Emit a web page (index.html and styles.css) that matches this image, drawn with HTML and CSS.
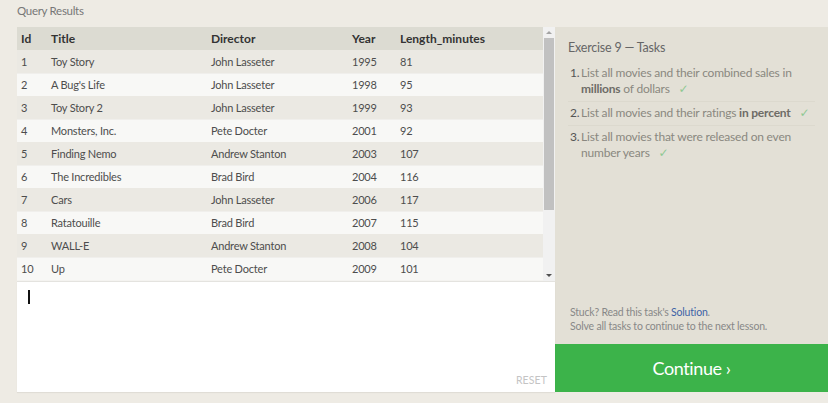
FILE: index.html
```html
<!DOCTYPE html>
<html>
<head>
<meta charset="utf-8">
<link rel="stylesheet" href="styles.css">
</head>
<body>
<div class="page">
  <div class="label">Query Results</div>
  <div class="main">
    <div class="left">
      <div class="results">
        <div class="table-wrap">
          <table class="grid">
            <thead>
              <tr><th class="c-id">Id</th><th class="c-title">Title</th><th class="c-dir">Director</th><th class="c-year">Year</th><th>Length_minutes</th></tr>
            </thead>
            <tbody>
              <tr><td>1</td><td>Toy Story</td><td>John Lasseter</td><td>1995</td><td>81</td></tr>
              <tr><td>2</td><td>A Bug's Life</td><td>John Lasseter</td><td>1998</td><td>95</td></tr>
              <tr><td>3</td><td>Toy Story 2</td><td>John Lasseter</td><td>1999</td><td>93</td></tr>
              <tr><td>4</td><td>Monsters, Inc.</td><td>Pete Docter</td><td>2001</td><td>92</td></tr>
              <tr><td>5</td><td>Finding Nemo</td><td>Andrew Stanton</td><td>2003</td><td>107</td></tr>
              <tr><td>6</td><td>The Incredibles</td><td>Brad Bird</td><td>2004</td><td>116</td></tr>
              <tr><td>7</td><td>Cars</td><td>John Lasseter</td><td>2006</td><td>117</td></tr>
              <tr><td>8</td><td>Ratatouille</td><td>Brad Bird</td><td>2007</td><td>115</td></tr>
              <tr><td>9</td><td>WALL-E</td><td>Andrew Stanton</td><td>2008</td><td>104</td></tr>
              <tr><td>10</td><td>Up</td><td>Pete Docter</td><td>2009</td><td>101</td></tr>
            </tbody>
          </table>
        </div>
        <div class="scrollbar">
          <div class="arrow up"></div>
          <div class="track"><div class="thumb"></div></div>
          <div class="arrow down"></div>
        </div>
      </div>
      <div class="editor">
        <div class="caret"></div>
        <div class="reset">RESET</div>
      </div>
    </div>
    <div class="right">
      <div class="tasks">
        <div class="tasks-title">Exercise 9 — Tasks</div>
        <ol class="task-list">
          <li><span class="num">1.</span><span class="txt">List all movies and their combined sales in <b>millions</b> of dollars <span class="check">✓</span></span></li>
          <li><span class="num">2.</span><span class="txt">List all movies and their ratings <b>in percent</b> <span class="check">✓</span></span></li>
          <li><span class="num">3.</span><span class="txt">List all movies that were released on even number years <span class="check">✓</span></span></li>
        </ol>
        <div class="help">
          <div>Stuck? Read this task's <span class="link">Solution</span>.</div>
          <div>Solve all tasks to continue to the next lesson.</div>
        </div>
      </div>
      <div class="continue">Continue ›</div>
    </div>
  </div>
</div>
</body>
</html>
```
FILE: styles.css
```css
* { box-sizing: border-box; }
html, body { margin: 0; padding: 0; }
body {
  background: #eeebe4;
  font-family: "Lato", "Open Sans", sans-serif;
  color: #555;
  width: 828px;
  height: 403px;
  overflow: hidden;
}
.page { padding: 3px 0 0 17px; }
.label {
  font-size: 11.5px;
  letter-spacing: -0.3px;
  color: #777;
  height: 24px;
  line-height: 16px;
}
.main { display: flex; }
.left { width: 538px; display: flex; flex-direction: column; }
.results { display: flex; height: 254px; background: #f4f3f0; }
.table-wrap { width: 526px; overflow: hidden; }
.grid { border-collapse: collapse; width: 100%; font-size: 11px; letter-spacing: -0.2px; }
.grid th {
  background: #dcdbd2;
  color: #333;
  font-weight: 700;
  font-size: 12px;
  letter-spacing: 0;
  text-align: left;
  height: 23px;
  padding: 0 0 0 4px;
}
.grid td {
  height: 23px;
  padding: 0 0 0 4px;
  color: #4d4d4d;
}
.grid tbody tr:nth-child(odd) td { background: #ebe9e3; }
.grid tbody tr:nth-child(even) td { background: #f8f8f6; border-top: 1px solid #f0efec; }
.c-id { width: 30px; }
.c-title { width: 160px; }
.c-dir { width: 141px; }
.c-year { width: 48px; }
.scrollbar {
  width: 12px;
  background: #f1f1f1;
  display: flex;
  flex-direction: column;
  align-items: center;
}
.arrow { height: 11px; width: 12px; position: relative; }
.arrow.up::after, .arrow.down::after {
  content: "";
  position: absolute;
  left: 3px;
  border-left: 3px solid transparent;
  border-right: 3px solid transparent;
}
.arrow.up::after { top: 4px; border-bottom: 3px solid #a3a3a3; }
.arrow.down::after { top: 4px; border-top: 3px solid #505050; }
.track { flex: 1; width: 12px; padding: 0 1px; }
.thumb { height: 172px; background: #c1c1c1; }
.editor {
  height: 111px;
  background: #fff;
  position: relative;
  box-shadow: 0 1px 1px rgba(0,0,0,0.06);
  border-top: 1px solid #e4e3df;
}
.caret {
  position: absolute;
  left: 11px;
  top: 8px;
  width: 1.5px;
  height: 14px;
  background: #111;
}
.reset {
  position: absolute;
  right: 8px;
  bottom: 6px;
  font-size: 10.5px;
  color: #c4c4c4;
  letter-spacing: 0.1px;
}
.right { width: 273px; display: flex; flex-direction: column; }
.tasks {
  background: #e3e0d6;
  height: 317px;
  padding: 13px 13px 0 13px;
  display: flex;
  flex-direction: column;
}
.tasks-title { font-size: 12.5px; letter-spacing: -0.2px; color: #666; line-height: 16px; margin-bottom: 9px; }
.task-list { list-style: none; margin: 0; padding: 0; font-size: 12px; letter-spacing: -0.2px; color: #8a8880; }
.task-list li {
  display: flex;
  line-height: 16px;
  padding: 0 0 4px 2px;
  margin-bottom: 3px;
  border-bottom: 1px solid #dcd9ce;
}
.task-list li:last-child { border-bottom: none; }
.num { color: #555; width: 11px; flex: none; }
.txt b { color: #6e6c66; font-weight: 700; }
.check {
  font-family: "DejaVu Sans", sans-serif;
  font-size: 12px;
  line-height: 0;
  color: #8fc893;
  margin-left: 6px;
}
.help { margin-top: auto; padding: 0 0 11px 2px; font-size: 10.5px; letter-spacing: -0.2px; color: #888; line-height: 14px; }
.link { color: #3e63a6; }
.continue {
  height: 48px;
  background: #3cb34a;
  color: #fff;
  font-size: 18px;
  letter-spacing: -0.4px;
  display: flex;
  align-items: center;
  justify-content: center;
}
```
